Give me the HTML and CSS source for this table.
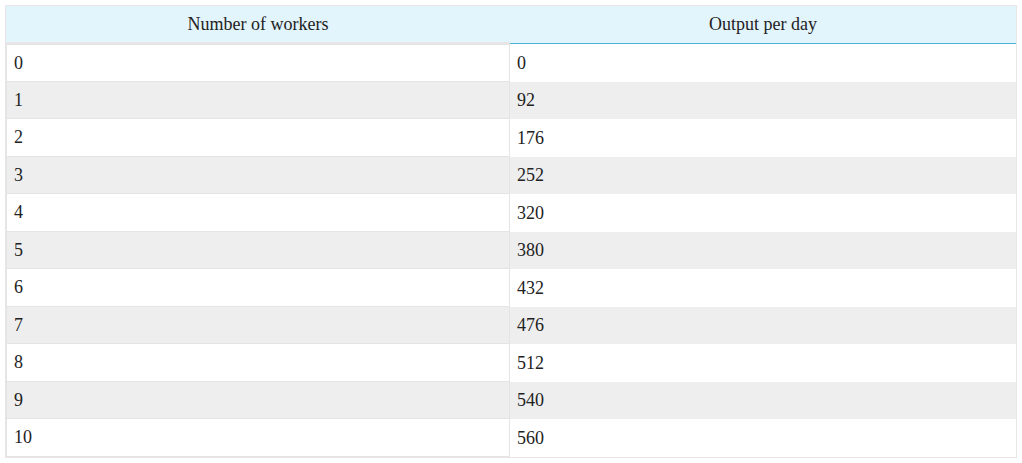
FILE: index.html
```html
<!DOCTYPE html>
<html>
<head>
<meta charset="utf-8">
<link rel="stylesheet" href="styles.css">
</head>
<body>
<table class="data">
  <colgroup><col class="col1"><col class="col2"></colgroup>
  <thead>
    <tr><th class="c1">Number of workers</th><th class="c2">Output per day</th></tr>
  </thead>
  <tbody>
    <tr><td class="c1">0</td><td class="c2">0</td></tr>
    <tr><td class="c1">1</td><td class="c2">92</td></tr>
    <tr><td class="c1">2</td><td class="c2">176</td></tr>
    <tr><td class="c1">3</td><td class="c2">252</td></tr>
    <tr><td class="c1">4</td><td class="c2">320</td></tr>
    <tr><td class="c1">5</td><td class="c2">380</td></tr>
    <tr><td class="c1">6</td><td class="c2">432</td></tr>
    <tr><td class="c1">7</td><td class="c2">476</td></tr>
    <tr><td class="c1">8</td><td class="c2">512</td></tr>
    <tr><td class="c1">9</td><td class="c2">540</td></tr>
    <tr><td class="c1">10</td><td class="c2">560</td></tr>
  </tbody>
</table>
</body>
</html>
```
FILE: styles.css
```css
html, body {
  margin: 0;
  padding: 0;
  background: #ffffff;
}
body {
  padding: 5px;
  font-family: "Liberation Serif", "Times New Roman", serif;
  font-size: 18px;
  color: #222222;
}
.data {
  width: 1012px;
  border-collapse: separate;
  border-spacing: 0;
  border: 1px solid #e6e6e6;
  table-layout: fixed;
  font-family: "Liberation Serif", "Times New Roman", serif;
  font-size: 18px;
}
.col1 {
  width: 504px;
}
.data th,
.data td {
  font-family: "Liberation Serif", "Times New Roman", serif;
  font-size: 18px;
  box-sizing: border-box;
}
.data th {
  background: #e2f4fc;
  font-weight: normal;
  text-align: center;
  height: 38px;
  padding: 0 7px;
  color: #222222;
}
.data th.c1 {
  border-bottom: 2px solid #e6e6e6;
}
.data th.c2 {
  border-bottom: 1px solid #4fb0d8;
}
.data td {
  height: 37.5px;
  padding: 0 7px;
  text-align: left;
  line-height: 20px;
}
.data td.c1 {
  border: 1px solid #e4e4e4;
  border-top: 0;
}
.data tbody tr:first-child td.c1 {
  border-top: 1px solid #e4e4e4;
}
.data tbody tr:nth-child(even) td {
  background: #eeeeee;
}
```
